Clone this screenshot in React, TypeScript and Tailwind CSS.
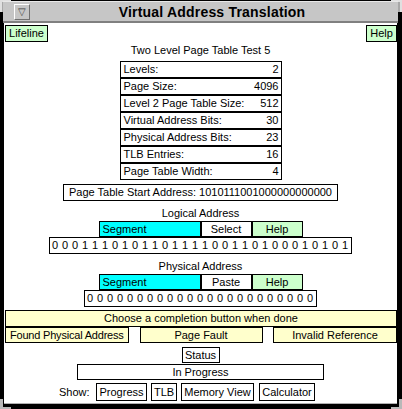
import React from "react";

const font = { fontFamily: '"Liberation Sans", Arial, sans-serif' };

const params: [string, string][] = [
  ["Levels:", "2"],
  ["Page Size:", "4096"],
  ["Level 2 Page Table Size:", "512"],
  ["Virtual Address Bits:", "30"],
  ["Physical Address Bits:", "23"],
  ["TLB Entries:", "16"],
  ["Page Table Width:", "4"],
];

const logicalBits = "000111010110111100110100010101".split("");
const physicalBits = "00000000000000000000000".split("");

function Bits({ bits, width }: { bits: string[]; width: string }) {
  return (
    <div className={`${width} mx-auto h-[17px] border border-black bg-white flex items-center pl-[2px]`}>
      {bits.map((b, i) => (
        <span key={i} className="w-[10px] shrink-0 text-left">
          {b}
        </span>
      ))}
    </div>
  );
}

function AddressBar({ action }: { action: string }) {
  return (
    <div className="w-[204px] mx-auto h-[16px] flex">
      <div className="w-[102px] border border-black bg-[#00ffff] flex items-center pl-[3px]">Segment</div>
      <div className="w-[51px] border border-black bg-white flex items-center justify-center">{action}</div>
      <div className="w-[51px] border border-black bg-[#ccffcc] flex items-center justify-center">Help</div>
    </div>
  );
}

export default function App() {
  return (
    <div className="relative w-[402px] h-[409px] bg-black overflow-hidden text-[11px] text-black whitespace-nowrap" style={font}>
      {/* frame corners */}
      <div className="absolute left-0 top-0 w-[11px] h-[12px] bg-[#a8a8a8] border-l-[2px] border-t-[2px] border-[#e0e0e0]" />
      <div className="absolute right-0 top-0 w-[11px] h-[12px] bg-[#a8a8a8] border-r-[2px] border-t-[2px] border-[#e0e0e0]" />
      <div className="absolute left-0 bottom-0 w-[11px] h-[10px] border-l-[3px] border-b-[2px] border-[#b8b8b8]" />
      <div className="absolute right-0 bottom-0 w-[11px] h-[10px] border-r-[3px] border-b-[2px] border-[#b8b8b8]" />

      {/* title bar */}
      <div className="relative mt-[1px] ml-[3px] mr-[4px] h-[22px] bg-[#c6c6c6] border-t border-[#e8e8e8] border-b-[2px] border-b-[#808080] flex items-center">
        <div className="ml-[11px] w-[16px] h-[16px] border border-t-white border-l-white border-r-[#707070] border-b-[#707070] flex items-center justify-center text-[10px] text-[#404040] leading-none">
          ▽
        </div>
        <div className="flex-1 text-center text-[14px] font-bold tracking-[0.2px] leading-none pr-[4px]">
          Virtual Address Translation
        </div>
      </div>

      {/* content */}
      <div className="relative ml-[4px] mr-[5px] h-[381px] bg-white border-b border-[#b0b0b0]">
        <div className="pt-[2px] pl-[1px] flex justify-between">
          <div className="w-[43px] h-[17px] border border-black bg-[#ccffcc] flex items-center justify-center">Lifeline</div>
          <div className="w-[31px] h-[17px] border border-black bg-[#ccffcc] flex items-center justify-center">Help</div>
        </div>

        <div className="h-[17px] flex items-center justify-center">Two Level Page Table Test 5</div>

        <div className="mt-[2px] w-[162px] mx-auto">
          {params.map(([k, v]) => (
            <div key={k} className="h-[17px] border border-black flex items-center justify-between pl-[3px] pr-[2px]">
              <span>{k}</span>
              <span>{v}</span>
            </div>
          ))}
        </div>

        <div className="mt-[4px] w-[275px] mx-auto h-[17px] border border-black flex items-center justify-center">
          Page Table Start Address: 1010111001000000000000
        </div>

        <div className="h-[20px] pt-[4px] flex items-center justify-center">Logical Address</div>
        <AddressBar action="Select" />
        <Bits bits={logicalBits} width="w-[303px]" />

        <div className="h-[20px] pt-[4px] flex items-center justify-center">Physical Address</div>
        <AddressBar action="Paste" />
        <Bits bits={physicalBits} width="w-[233px]" />

        <div className="mt-[3px] ml-[1px] w-[392px] h-[17px] border border-black bg-[#ffffcc] flex items-center justify-center">
          Choose a completion button when done
        </div>
        <div className="ml-[1px] w-[392px] h-[16px] flex justify-between">
          <div className="w-[124px] border border-black bg-[#ffffcc] flex items-center pl-[4px] tracking-[-0.2px] overflow-hidden">
            Found Physical Address
          </div>
          <div className="w-[123px] border border-black bg-[#ffffcc] flex items-center justify-center">Page Fault</div>
          <div className="w-[124px] border border-black bg-[#ffffcc] flex items-center justify-center">Invalid Reference</div>
        </div>

        <div className="mt-[4px] w-[38px] mx-auto h-[16px] border border-black flex items-center justify-center">Status</div>
        <div className="mt-[1px] w-[247px] mx-auto h-[16px] border border-black flex items-center justify-center">In Progress</div>

        <div className="mt-[3px] h-[18px] flex items-stretch pl-[55px]">
          <span className="w-[37px] flex items-center">Show:</span>
          <div className="w-[51px] border border-black flex items-center justify-center">Progress</div>
          <div className="ml-[4px] w-[26px] border border-black flex items-center justify-center">TLB</div>
          <div className="ml-[4px] w-[73px] border border-black flex items-center justify-center">Memory View</div>
          <div className="ml-[5px] w-[56px] border border-black flex items-center justify-center">Calculator</div>
        </div>
      </div>
    </div>
  );
}
